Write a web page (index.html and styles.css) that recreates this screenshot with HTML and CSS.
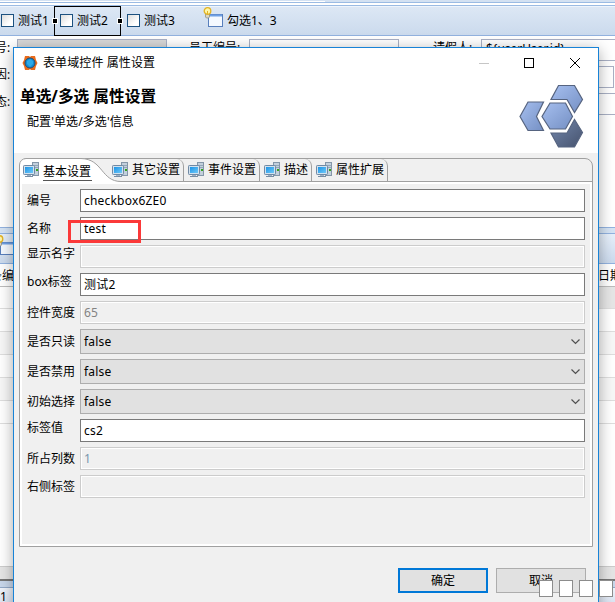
FILE: index.html
```html
<!DOCTYPE html>
<html lang="zh-CN">
<head>
<meta charset="utf-8">
<title>表单域控件 属性设置</title>
<link rel="stylesheet" href="styles.css">
</head>
<body>
<svg class="defs" width="0" height="0">
  <defs>
    <linearGradient id="screen" x1="0" y1="0" x2="1" y2="1"><stop offset="0" stop-color="#1c93e6"/><stop offset="1" stop-color="#6fc9f8"/></linearGradient>
    <linearGradient id="hexLight" x1="0" y1="0" x2="1" y2="1"><stop offset="0" stop-color="#a6bfef"/><stop offset="1" stop-color="#7590c4"/></linearGradient>
    <linearGradient id="hexDark" x1="0" y1="0" x2="1" y2="1"><stop offset="0" stop-color="#7488ad"/><stop offset="1" stop-color="#46536e"/></linearGradient>
    <symbol id="pc" viewBox="0 0 16 16">
      <rect x="9.5" y=".5" width="6" height="13" fill="#c3d0dc" stroke="#8496a8"/>
      <path d="M10 3.5h5M10 5.5h5" stroke="#93a6b7"/>
      <rect x="13" y="7" width="2" height="2" fill="#35a51c"/>
      <rect x=".5" y="3.5" width="11" height="9" rx=".8" fill="#d3e2ee" stroke="#7089a4"/>
      <rect x="2" y="5" width="8" height="6" fill="url(#screen)"/>
      <path d="M4 13h4v1.5H4z" fill="#9eb0c2"/><path d="M2 14.500h8" stroke="#778da3"/>
    </symbol>
    <symbol id="panel" viewBox="0 0 21 22">
      <rect x="5.5" y="7.500" width="14" height="12" fill="#f4f9ff" stroke="#587fbc"/>
      <path d="M6 8.500h13" stroke="#6fa0e4" stroke-width="2"/>
      <path d="M2.500 7h4v3l-1 1h-2l-1-1z" fill="#d9d5c4" stroke="#8b8878" stroke-width=".7"/>
      <circle cx="4.500" cy="4" r="3.300" fill="#fff6a8" stroke="#e2b325" stroke-width="1.300"/>
      <path d="M4.500 4v4" stroke="#e2b325"/>
    </symbol>
  </defs>
</svg>

<main class="editor">
  <div class="topline"><i></i></div>
  <div class="toolbar">
    <label class="check"><i></i>测试1</label>
    <label class="check selected"><i></i>测试2</label>
    <label class="check third"><i></i>测试3</label>
    <span class="tool"><svg width="21" height="22"><use href="#panel"/></svg>勾选1、3</span>
  </div>
  <div class="form">
    <div class="line"><span class="cap edge">号:</span><span class="box gray"></span><span class="cap staff">员工编号:</span><span class="box mid"></span><span class="cap leave">请假人:</span><span class="box user">${userUser.id}</span></div>
    <div class="line second"><span class="cap edge">因:</span><span class="box wide"></span></div>
    <div class="line third-line"><span class="cap edge">态:</span><span class="box full"></span></div>
  </div>
  <div class="section"><svg width="21" height="22"><use href="#panel"/></svg></div>
  <div class="columns"><span>条编</span><span>日期</span></div>
  <div class="grid"><i class="head"></i><i></i><i class="alt"></i><i></i><i class="alt"></i><i></i></div>
  <div class="scroll"></div>
  <div class="status">1</div>
</main>

<div class="dialog">
  <header class="titlebar">
    <svg class="app" width="16" height="16" viewBox="0 0 16 16"><path d="M3 1h4l1 1 1-1h4l1 4 1.500 3L14 11l-1 4H9l-1-1-1 1H3l-1-4L.5 8 2 5z" fill="#e96b1b"/><circle cx="8" cy="8" r="5" fill="#148bd0" stroke="#234b70"/><path d="M5 6l3-2 3 2v3l-3 3-3-3z" fill="#2ba9e8"/></svg>
    <span class="caption">表单域控件 属性设置</span>
    <svg class="controls" width="110" height="18" viewBox="0 0 110 18" fill="none" shape-rendering="crispEdges"><path d="M3 9.500h10" stroke="#c6c6c6"/><rect x="48.500" y="4.500" width="9" height="9" stroke="#000"/><path d="M94 4l10 10M104 4L94 14" stroke="#000" shape-rendering="auto"/></svg>
  </header>
  <section class="banner">
    <div><h1>单选/多选 属性设置</h1><p>配置'单选/多选'信息</p></div>
    <svg class="logo" width="66" height="66" viewBox="0 0 66 66" stroke="#566480" stroke-width="1.200">
      <path d="M39.500 1.500h16l8 14-8 13-7.500-13H32z" fill="url(#hexLight)"/>
      <path d="M9 18h15.500l-7 14.500 7 14H9L1 32.500z" fill="url(#hexLight)"/>
      <path d="M31 19h15.500l7 13.500-7 12.500H31l-8-12.500z" fill="url(#hexLight)"/>
      <path d="M55.500 35.500l8 13-8 14.500h-16L32 49h16z" fill="url(#hexDark)"/>
    </svg>
  </section>
  <section class="folder">
    <nav class="tabs">
      <svg class="curve" width="120" height="24" viewBox="0 0 120 24"><path d="M0 24V7Q1 1 7 .5h55C84 1 82 23.500 102 23.500V24z" fill="#fff"/><path d="M.5 24V7Q1 1 7 .5h55C84 1 82 23.500 102 23.500h18" fill="none" stroke="#a0a0a0"/></svg>
      <a class="tab active"><svg width="16" height="16"><use href="#pc"/></svg><span>基本设置</span></a>
      <a class="tab t2"><svg width="16" height="16"><use href="#pc"/></svg>其它设置</a>
      <a class="tab t3"><svg width="16" height="16"><use href="#pc"/></svg>事件设置</a>
      <a class="tab t4"><svg width="16" height="16"><use href="#pc"/></svg>描述</a>
      <a class="tab t5"><svg width="16" height="16"><use href="#pc"/></svg>属性扩展</a>
    </nav>
    <div class="fields">
      <div class="row"><label>编号</label><div class="input">checkbox6ZE0</div></div>
      <div class="row"><label>名称</label><div class="input">test</div><i class="mark"></i></div>
      <div class="row"><label class="r3">显示名字</label><div class="input off"></div></div>
      <div class="row"><label class="r4">box标签</label><div class="input">测试2</div></div>
      <div class="row"><label>控件宽度</label><div class="input off">65</div></div>
      <div class="row combo"><label>是否只读</label><div class="input">false<svg width="9" height="6"><path d="M.5 .5l4 4 4-4" fill="none" stroke="#505050" stroke-width="1.200"/></svg></div></div>
      <div class="row combo"><label>是否禁用</label><div class="input">false<svg width="9" height="6"><path d="M.5 .5l4 4 4-4" fill="none" stroke="#505050" stroke-width="1.200"/></svg></div></div>
      <div class="row combo"><label>初始选择</label><div class="input">false<svg width="9" height="6"><path d="M.5 .5l4 4 4-4" fill="none" stroke="#505050" stroke-width="1.200"/></svg></div></div>
      <div class="row"><label class="r3">标签值</label><div class="input">cs2</div></div>
      <div class="row"><label>所占列数</label><div class="input off blue">1</div></div>
      <div class="row"><label>右侧标签</label><div class="input off"></div></div>
    </div>
  </section>
  <footer class="actions"><button class="ok">确定</button><button>取消</button></footer>
</div>
<div class="pager"><i></i><i></i><i></i><i></i></div>
</body>
</html>
```
FILE: styles.css
```css
* { box-sizing: border-box; }
body, button {
  font-family: "Noto Sans", "Noto Sans CJK SC", sans-serif;
  font-size: 12px;
  line-height: 16px;
  color: #000;
}
body { margin: 0; width: 615px; height: 602px; overflow: hidden; position: relative; background: #fff; }
.defs { position: absolute; }
svg { flex: none; display: block; }

.editor { width: 615px; height: 602px; overflow: hidden; display: flex; flex-direction: column; }
.editor > * { flex: none; }
.topline { height: 3px; background: #d3e1f2; border-bottom: 1px solid #9bbbe3; }
.topline i { display: block; width: 325px; height: 2px; background: #fff; border-top: 1px solid #d3e1f2; }
.toolbar { height: 31px; margin-top: 2px; display: flex; align-items: center; border-top: 1px solid #9bbbe3; border-bottom: 1px solid #92b2df; background: linear-gradient(#dde8f5, #cbdaed); box-shadow: inset 0 1px #eef4fc; }
.check { display: flex; align-items: center; gap: 4px; height: 30px; padding-left: 1px; width: 54px; }
.check i { width: 13px; height: 13px; border: 1px solid #1c5180; background: linear-gradient(135deg, #ddd, #fff 70%); }
.check.selected { width: 67px; border: 1px solid #000; padding-left: 5px; position: relative; }
.check.selected::before, .check.selected::after { content: ""; position: absolute; top: 12px; width: 4px; height: 4px; background: #000; outline: 1px solid #fff; }
.check.selected::before { left: -2px; }
.check.selected::after { right: -2px; }
.third { padding-left: 6px; width: 82px; }
.tool { display: flex; align-items: center; gap: 3px; }
.tool svg { margin-top: -5px; }

.form { height: 191px; padding-top: 3px; }
.line { display: flex; height: 22px; }
.cap { padding-top: 1px; white-space: nowrap; flex: none; }
.edge { width: 17px; margin-left: -5px; padding-right: 4px; }
.box { border: 1px solid #a9b0c4; height: 22px; flex: none; }
.gray { width: 150px; margin-left: 5px; background: #d8d8d8; }
.staff { width: 60px; margin-left: 22px; }
.mid { width: 150px; }
.leave { width: 48px; margin-left: 34px; }
.user { width: 145px; padding: 1px 4px; }
.second, .third-line { margin-top: 5px; }
.wide { width: 597px; margin-left: 5px; height: 22px; }
.full { width: 620px; margin-left: 5px; }

.section { height: 37px; border-top: 1px solid #92b2df; border-bottom: 1px solid #92b2df; background: linear-gradient(#d5e4f5 5px, #92b2df 5px, #92b2df 6px, #e7f0fb 6px, #cbdaed); overflow: hidden; padding-top: 7px; }
.section svg { margin-left: -5px; }
.columns { height: 22px; padding: 4px 0 0; display: flex; justify-content: space-between; white-space: nowrap; }
.columns span:first-child { margin-left: -10px; }
.columns span:last-child { margin-right: -7px; }
.grid i { display: block; height: 23px; border-bottom: 1px solid #dedede; background: #fff; }
.grid .head { background: linear-gradient(90deg, #fff 300px, #e6e6e6 300px); border-top: 1px solid #bcbcbc; }
.grid .alt { background: #f7f7f7; }
.scroll { height: 15px; margin-top: 142px; background: #e5e5e5; border-top: 1px solid #ccc; border-bottom: 2px solid #777; }
.status { height: 30px; padding-top: 8px; padding-left: 0; background: linear-gradient(#c8d7eb 6px, #92a9c8 6px, #92a9c8 7px, #f0f4fb 7px, #cfdbed); }

.dialog { position: absolute; left: 13px; top: 47px; width: 586px; height: 570px; border: 1px solid #1883d7; background: #f0f0f0; box-shadow: 0 3px 14px rgba(0,0,0,.34); display: flex; flex-direction: column; }
.titlebar { height: 30px; background: #fff; display: flex; align-items: center; padding: 0 12px 0 8px; flex: none; }
.app { margin-top: -1px; }
.caption { margin-left: 5px; flex: 1; letter-spacing: .1px; }
.banner { height: 75px; flex: none; background: #fff; display: flex; justify-content: space-between; padding: 7px 13px 0 6px; }
h1 { margin: 1px 0 0; font-size: 15.700px; line-height: 20px; font-weight: 700; white-space: nowrap; }
p { margin: 8px 0 0 7px; letter-spacing: .1px; }
.logo { margin-top: -1px; }
.folder { margin: 5px 5px 0; height: 389px; flex: none; border: 1px solid #a0a0a0; border-radius: 8px 8px 0 0; }
.tabs { position: relative; height: 23px; display: flex; border-bottom: 1px solid #a0a0a0; }
.curve { position: absolute; left: -1px; top: -1px; }
.tab { position: relative; display: flex; align-items: center; gap: 4px; height: 22px; padding-left: 3px; white-space: nowrap; }
.active { width: 89px; }
.active span { border-bottom: 1px solid #555; line-height: 17px; padding: 3px 1px 0 0; }
.t2, .t3, .t4, .t5 { border-right: 1px solid #a0a0a0; border-top-right-radius: 7px; }
.t2 { width: 75px; }
.t3 { width: 76px; padding-left: 4px; }
.t4 { width: 52px; padding-left: 4px; }
.t5 { width: 76px; padding-left: 4px; }
.fields { height: 364px; border: 2px solid #fff; padding: 5px 5px; display: flex; flex-direction: column; gap: 5px; }
.row { display: flex; align-items: center; height: 23px; position: relative; flex: none; }
.row label { width: 53px; flex: none; white-space: nowrap; }
.row .r3 { padding-bottom: 6px; }
.row .r4 { padding-bottom: 5px; }
.input { flex: 1; height: 23px; border: 1px solid #7a7a7a; background: #fff; padding: 3px 3px 0; letter-spacing: .2px; }
.off { border-color: #ccc; background: #f0f0f0; box-shadow: inset 0 0 0 1px #fff; color: #838383; }
.blue { color: #7896ad; }
.combo { height: 25px; }
.combo .input { height: 25px; background: #e1e1e1; border-color: #adadad; display: flex; align-items: center; justify-content: space-between; padding: 0 4px 0 3px; }
.mark { position: absolute; left: 41px; top: 3px; width: 73px; height: 23px; border: 3px solid #fb3939; }
.actions { display: flex; justify-content: flex-end; gap: 8px; padding: 21px 12px 0 0; }
button { width: 90px; height: 25px; padding: 0; border: 1px solid #adadad; background: #e1e1e1; }
.ok { border: 2px solid #0078d7; }
.pager { position: absolute; left: 539px; top: 580px; display: flex; gap: 6px; }
.pager i { width: 14px; height: 17px; background: #fff; border: 1px solid #8c8c8c; }
```
